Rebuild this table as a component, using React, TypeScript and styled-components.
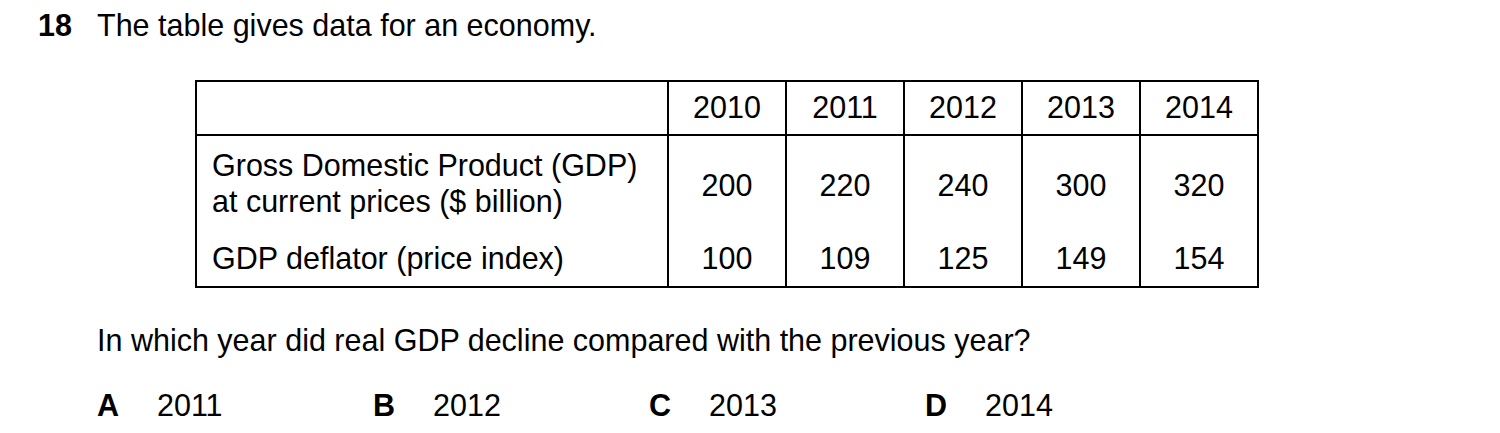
import styled, { createGlobalStyle } from "styled-components";

const GlobalStyle = createGlobalStyle`
  html, body {
    margin: 0;
    padding: 0;
    background: #ffffff;
  }
  body {
    font-family: "Liberation Sans", Arial, sans-serif;
    color: #000000;
  }
`;

const Page = styled.div`
  width: 1500px;
  height: 433px;
  padding: 10px 0 0 38px;
  box-sizing: border-box;
  font-size: 30.5px;
  line-height: 1;
`;

const QuestionHead = styled.div`
  display: flex;
  align-items: baseline;
`;

const Number = styled.span`
  font-weight: 700;
  width: 59px;
`;

const Body = styled.div`
  padding-left: 59px;
`;

const DataTable = styled.table`
  border-collapse: collapse;
  margin: 39px 0 0 157px;
  font-size: 30.5px;
`;

const HeadCell = styled.th`
  font-weight: 400;
  height: 52px;
  width: 116px;
  border: 2px solid #000;
  text-align: center;
  padding: 0;
  &:first-child {
    width: 470px;
  }
`;

const LabelCell = styled.td<{ $top?: boolean }>`
  border-left: 2px solid #000;
  border-right: 2px solid #000;
  border-bottom: ${({ $top }) => ($top ? "none" : "2px solid #000")};
  padding: ${({ $top }) => ($top ? "11px 10px 8px 15px" : "13px 10px 10px 15px")};
  line-height: 36px;
  text-align: left;
`;

const ValueCell = styled.td<{ $top?: boolean }>`
  border-left: 2px solid #000;
  border-right: 2px solid #000;
  border-bottom: ${({ $top }) => ($top ? "none" : "2px solid #000")};
  padding: ${({ $top }) => ($top ? "8px 0 0" : "13px 0 10px")};
  line-height: 36px;
  text-align: center;
`;

const Prompt = styled.p`
  margin: 37px 0 0;
`;

const Options = styled.div`
  display: grid;
  grid-template-columns: repeat(4, 276px);
  margin-top: 35px;
`;

const Option = styled.div`
  display: flex;
  align-items: baseline;
`;

const OptionLetter = styled.span`
  font-weight: 700;
  width: 60px;
`;

const years = ["2010", "2011", "2012", "2013", "2014"];
const gdp = ["200", "220", "240", "300", "320"];
const deflator = ["100", "109", "125", "149", "154"];
const answers = [
  ["A", "2011"],
  ["B", "2012"],
  ["C", "2013"],
  ["D", "2014"],
];

export default function App() {
  return (
    <>
      <GlobalStyle />
      <Page>
        <QuestionHead>
          <Number>18</Number>
          <span>The table gives data for an economy.</span>
        </QuestionHead>
        <DataTable>
          <thead>
            <tr>
              <HeadCell />
              {years.map((y) => (
                <HeadCell key={y}>{y}</HeadCell>
              ))}
            </tr>
          </thead>
          <tbody>
            <tr>
              <LabelCell $top>
                Gross Domestic Product (GDP)
                <br />
                at current prices ($ billion)
              </LabelCell>
              {gdp.map((v) => (
                <ValueCell $top key={v}>
                  {v}
                </ValueCell>
              ))}
            </tr>
            <tr>
              <LabelCell>GDP deflator (price index)</LabelCell>
              {deflator.map((v) => (
                <ValueCell key={v}>{v}</ValueCell>
              ))}
            </tr>
          </tbody>
        </DataTable>
        <Body>
          <Prompt>In which year did real GDP decline compared with the previous year?</Prompt>
          <Options>
            {answers.map(([letter, year]) => (
              <Option key={letter}>
                <OptionLetter>{letter}</OptionLetter>
                <span>{year}</span>
              </Option>
            ))}
          </Options>
        </Body>
      </Page>
    </>
  );
}
